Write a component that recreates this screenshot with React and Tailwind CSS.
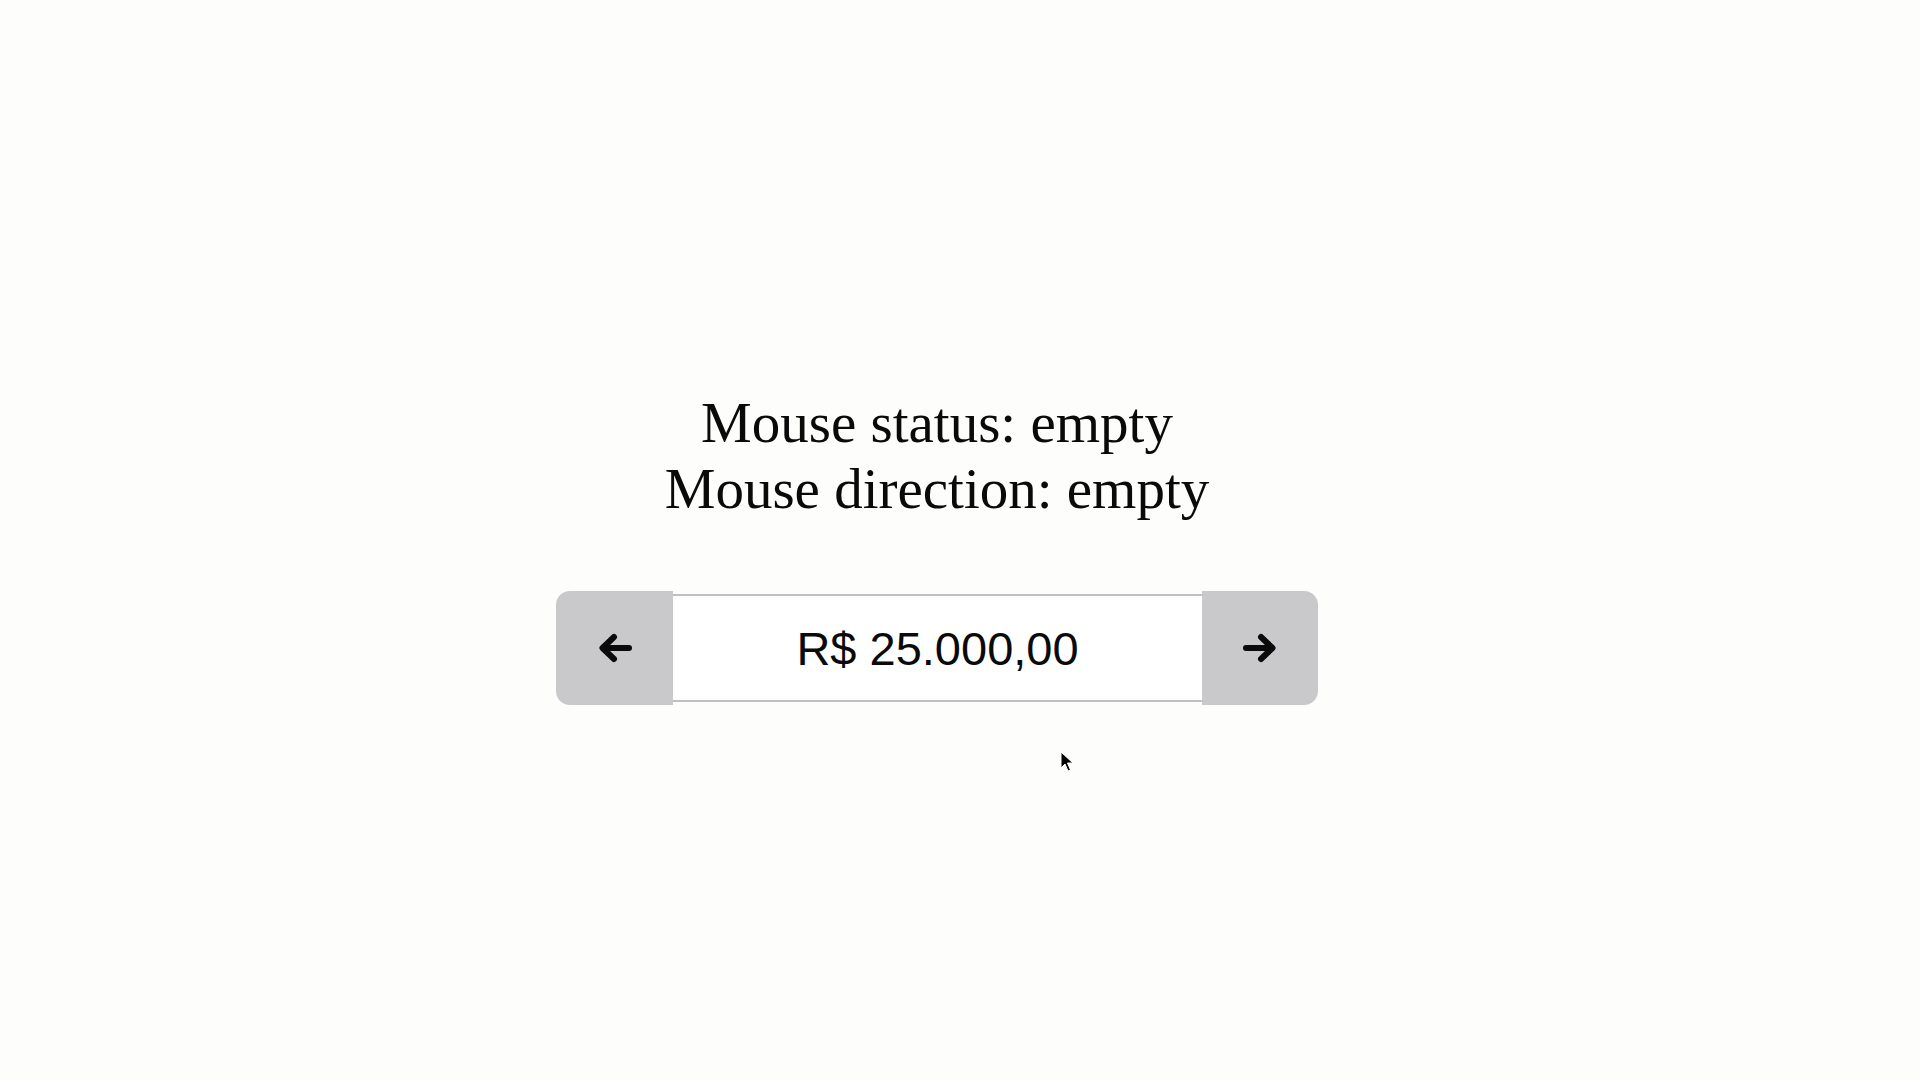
import React from "react";

const Arrow = ({ dir = "left" }) => (
  <svg
    width="34"
    height="30"
    viewBox="0 0 34 30"
    fill="none"
    stroke="#0a0a0a"
    strokeWidth="6"
    strokeLinecap="round"
    strokeLinejoin="round"
    className={dir === "right" ? "rotate-180" : ""}
  >
    <path d="M31 15H6" />
    <path d="M16 4L4.5 15 16 26" />
  </svg>
);

const App = () => {
  return (
    <div className="relative min-h-screen bg-[#fdfdfb] flex flex-col items-center justify-center pt-[15px] pr-[46px]">
      {/* Mouse info */}
      <div
        className="text-center text-[57px] leading-[66px] text-[#0a0a0a]"
        style={{ fontFamily: '"Liberation Serif", "Times New Roman", serif' }}
      >
        <div>Mouse status: empty</div>
        <div>Mouse direction: empty</div>
      </div>

      {/* Value control */}
      <div className="mt-[69px] flex items-center">
        <button className="w-[117px] h-[114px] bg-[#c9c9cb] rounded-l-[14px] flex items-center justify-center">
          <Arrow dir="left" />
        </button>
        <input
          type="text"
          readOnly
          value="R$ 25.000,00"
          className="w-[529px] h-[108px] bg-white border-y-2 border-[#bfbfbf] text-center text-[47px] text-[#0a0a0a] outline-none"
          style={{ fontFamily: '"Liberation Sans", Arial, sans-serif' }}
        />
        <button className="w-[116px] h-[114px] bg-[#c9c9cb] rounded-r-[14px] flex items-center justify-center">
          <Arrow dir="right" />
        </button>
      </div>

      {/* Cursor */}
      <svg
        className="absolute left-[1060px] top-[751px]"
        width="13"
        height="22"
        viewBox="0 0 13 22"
      >
        <path
          d="M1 1v16l4-4 3 7 2.5-1-3-7h5.5z"
          fill="#000"
          stroke="#fff"
          strokeWidth="1"
        />
      </svg>
    </div>
  );
};

export default App;
